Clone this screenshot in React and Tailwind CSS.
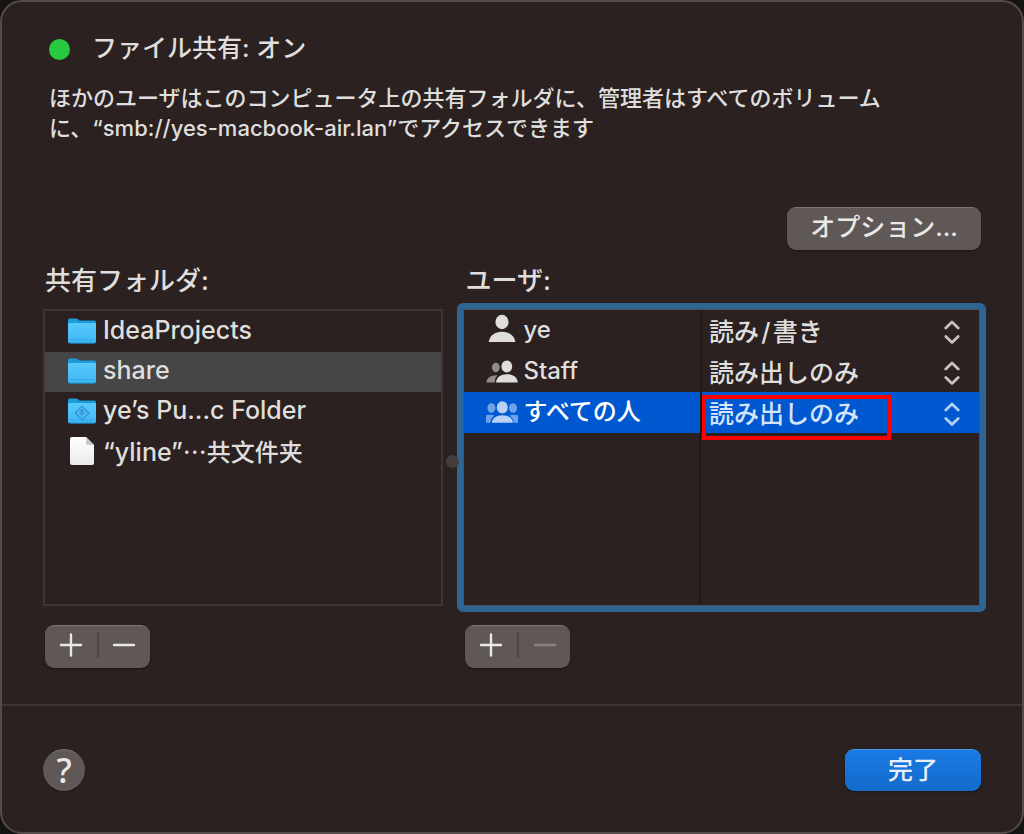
import React, { useState } from "react";

function FolderIcon({ shared }) {
  return (
    <svg viewBox="0 0 30 28" className="h-7 w-[30px] shrink-0" aria-hidden="true">
      <defs>
        <linearGradient id="folderFront" x1="0" y1="0" x2="0" y2="1">
          <stop offset="0" stopColor="#5bcafb" />
          <stop offset="1" stopColor="#3db6f5" />
        </linearGradient>
      </defs>
      <path d="M1 3.2Q1 1.5 2.7 1.5H9.2Q10.2 1.5 11 2.3L12.4 3.5H27.4Q29 3.5 29 5.1V20H1Z" fill="#1a9bdc" />
      <path d="M1 7Q1 6 2 6H28Q29 6 29 7V24.6Q29 26.3 27.3 26.3H2.7Q1 26.3 1 24.6Z" fill="url(#folderFront)" />
      <path d="M1 22.8H29" stroke="#31a6e4" strokeWidth="0.8" />
      <path d="M1.3 25.2Q1.8 26.1 3 26.1H27Q28.2 26.1 28.7 25.2" stroke="#188fcd" strokeWidth="0.9" fill="none" />
      {shared && (
        <g fill="none" stroke="#2f93cf" strokeWidth="1.1" strokeLinejoin="round">
          <path d="M15 9.2L21.8 16L15 22.8L8.2 16Z" />
          <path d="M15 12.2V19.5M12 16.2H18M12.8 14.5L15 12.3L17.2 14.5" />
        </g>
      )}
    </svg>
  );
}

function DocumentIcon() {
  return (
    <svg viewBox="0 0 30 30" className="h-[30px] w-[30px] shrink-0" aria-hidden="true">
      <defs>
        <linearGradient id="paper" x1="0" y1="0" x2="0" y2="1">
          <stop offset="0" stopColor="#ffffff" />
          <stop offset="1" stopColor="#ebebeb" />
        </linearGradient>
      </defs>
      <path d="M3 3Q3 1 5 1H19L27 9V27Q27 29 25 29H5Q3 29 3 27Z" fill="url(#paper)" />
      <path d="M19 1V7.2Q19 9 20.8 9H27Z" fill="#c9c9c9" />
    </svg>
  );
}

function UserIcon() {
  return (
    <svg viewBox="0 0 32 32" className="size-8 shrink-0" fill="#dfdedd" aria-hidden="true">
      <ellipse cx="16" cy="8" rx="6.6" ry="7.2" />
      <path d="M2.7 28C3.6 21.3 9 17.7 16 17.7S28.4 21.3 29.3 28Z" />
    </svg>
  );
}

function PairIcon() {
  return (
    <svg viewBox="0 0 32 24" className="h-6 w-8 shrink-0" aria-hidden="true">
      <g fill="#918c8b">
        <ellipse cx="9.8" cy="8.5" rx="3.9" ry="4.7" />
        <path d="M0.3 23.5C0.8 18.8 4.8 16 11.5 16.2C9.6 18 8.9 20.2 8.7 23.5Z" />
      </g>
      <g fill="#dfdedd">
        <ellipse cx="20.8" cy="7.5" rx="5.4" ry="5.9" />
        <path d="M10 23.5C10.6 18.2 14.7 15.3 20.9 15.3S31.2 18.2 31.8 23.5Z" />
      </g>
    </svg>
  );
}

function GroupIcon() {
  return (
    <svg viewBox="0 0 32 24" className="h-6 w-8 shrink-0" aria-hidden="true">
      <g fill="#6fa2e8">
        <ellipse cx="5.4" cy="8" rx="4" ry="4.8" />
        <ellipse cx="27" cy="8" rx="4" ry="4.8" />
        <path d="M0 15.2Q4.5 14 8.5 15.6C5.7 17.3 4.7 19.5 4.4 22.7H0Z" />
        <path d="M32 15.2Q27.5 14 23.5 15.6C26.3 17.3 27.3 19.5 27.6 22.7H32Z" />
      </g>
      <g fill="#b9d1f5">
        <ellipse cx="16.3" cy="7.4" rx="5.5" ry="6.1" />
        <path d="M5.8 22.7C6.4 18 10.2 15.2 16.3 15.2S26.4 18 27 22.7Z" />
      </g>
    </svg>
  );
}

function Stepper() {
  return (
    <svg viewBox="0 0 18 26" className="pointer-events-none h-[26px] w-[18px] shrink-0 opacity-85" fill="none" stroke="currentColor" strokeWidth="2.8" strokeLinecap="round" strokeLinejoin="round" aria-hidden="true">
      <path d="M2.8 8L9 2L15.2 8M2.8 16.5L9 22.5L15.2 16.5" />
    </svg>
  );
}

function PlusMinus({ label, minusDisabled }) {
  return (
    <div role="group" aria-label={label} className="flex h-[43px] w-[105px] items-center rounded-[9px] border-t border-[#7d7674] bg-[#605856] pb-1 text-[#e9e8e7] shadow-[0_1px_2px_#0006]">
      <button type="button" aria-label="追加" className="flex h-full flex-1 items-center justify-center">
        <svg viewBox="0 0 24 24" className="size-6" stroke="currentColor" strokeWidth="2.4" strokeLinecap="round" aria-hidden="true">
          <path d="M2 12H22M12 1.500V22.500" />
        </svg>
      </button>
      <span className="h-[26px] w-[2px] bg-[#4d4644]" />
      <button type="button" aria-label="削除" disabled={minusDisabled} className="flex h-full flex-1 items-center justify-center disabled:text-[#8a8381]">
        <svg viewBox="0 0 24 24" className="size-6" stroke="currentColor" strokeWidth="2.4" strokeLinecap="round" aria-hidden="true">
          <path d="M2 12H22" />
        </svg>
      </button>
    </div>
  );
}

const folders = [
  { name: "IdeaProjects", icon: <FolderIcon /> },
  { name: "share", icon: <FolderIcon /> },
  { name: "ye’s Pu...c Folder", icon: <FolderIcon shared /> },
  { name: "“yline”", rest: "⋯共文件夹", icon: <DocumentIcon /> },
];

const users = [
  { name: "ye", icon: <UserIcon />, access: "読み\u200a/\u200a書き" },
  { name: "Staff", icon: <PairIcon />, access: "読み出しのみ" },
  { name: "すべての人", icon: <GroupIcon />, access: "読み出しのみ", marked: true },
];

const levels = ["読み\u200a/\u200a書き", "読み出しのみ"];

export default function App() {
  const [folder, setFolder] = useState(1);
  const [user, setUser] = useState(2);

  return (
    <div className="min-h-screen bg-[#161313] font-['Inter','Noto_Sans_CJK_JP',sans-serif] text-2xl font-medium text-[#dfdedd]">
      <div className="flex min-h-screen flex-col rounded-[22px] border-2 border-[#544c4a] bg-[#2a2120]">
        <main className="flex-1 pr-9 pb-8 pl-[41px]">
          <header className="pt-[29px] pl-1.5">
            <h1 className="flex h-9 items-center gap-[22px] text-[25px] font-medium">
              <span className="size-[21px] rounded-full bg-[#28c840]" />
              ファイル共有: オン
            </h1>
            <p className="mt-4 max-w-[850px] text-[22px] leading-[30px]">
              ほかのユーザはこのコンピュータ上の共有フォルダに、管理者はすべてのボリュームに、“smb://yes-macbook-air.lan”でアクセスできます
            </p>
          </header>

          <div className="mt-16 flex justify-end pr-[5px]">
            <button type="button" className="h-[43px] w-[194px] rounded-[9px] border-t border-[#7d7674] bg-[#605856] pb-1 text-[25px] leading-9 text-[#e9e8e7] shadow-[0_1px_2px_#0006]">
              オプション...
            </button>
          </div>

          <div className="mt-3 grid grid-cols-[400fr_528fr] gap-x-3.5">
            <section className="flex flex-col">
              <h2 id="folders" className="h-[42px] pl-0.5 text-[26px] leading-[38px]">共有フォルダ:</h2>
              <div className="relative mt-[5px] h-[297px] border-2 border-[#3e3635]">
                <ul aria-labelledby="folders" className="pt-px">
                  {folders.map((f, i) => (
                    <li key={f.name}>
                      <button
                        type="button"
                        aria-pressed={folder === i}
                        onClick={() => setFolder(i)}
                        className={`flex h-10 w-full items-center gap-1.5 pb-0.5 pl-[22px] text-left text-[25px] whitespace-nowrap ${folder === i ? "bg-[#464646]" : ""}`}
                      >
                        {f.icon}
                        <span>
                          {f.name}
                          {f.rest && <span lang="zh" className="font-['Noto_Sans_CJK_SC',sans-serif] text-2xl leading-9">{f.rest}</span>}
                        </span>
                      </button>
                    </li>
                  ))}
                </ul>
                <span className="absolute top-[144px] -right-[18px] size-[13px] rounded-full bg-[#453e3d]" />
              </div>
              <div className="mt-[19px] pl-0.5">
                <PlusMinus label="共有フォルダ" />
              </div>
            </section>

            <section className="flex flex-col">
              <h2 className="h-[41px] pl-2 text-[26px] leading-[38px]">ユーザ:</h2>
              <div className="h-[309px] rounded-md border-6 border-[#2f6592] bg-[#2a2120]">
                <div className="flex h-full flex-col border border-[#4c5258]">
                  <table className="w-full table-fixed border-collapse" aria-label="ユーザ">
                    <tbody>
                      {users.map((u, i) => (
                        <tr key={u.name} onClick={() => setUser(i)} className={user === i ? "bg-[#0058d0] text-white" : ""}>
                          <td className="h-[41px] w-[46%] border-r-2 border-[#1d1b1b] p-0">
                            <div className="flex items-center gap-[5px] pb-0.5 pl-[22px] leading-9">
                              {u.icon}
                              {u.name}
                            </div>
                          </td>
                          <td className="h-[41px] p-0">
                            <div className={`relative flex h-[41px] items-center pt-1 pr-[18px] pl-[7px] ${user === i ? "text-[#d5e4fa]" : ""}`}>
                              <select aria-label={`${u.name}のアクセス権`} defaultValue={u.access} className="h-9 min-w-0 flex-1 appearance-none bg-transparent text-[25px] outline-none">
                                {levels.map((l) => (
                                  <option key={l} className="bg-[#2a2120]">{l}</option>
                                ))}
                              </select>
                              <Stepper />
                              {u.marked && <span className="pointer-events-none absolute top-[3px] left-0 h-[45px] w-[189px] border-4 border-[#ff0000]" />}
                            </div>
                          </td>
                        </tr>
                      ))}
                    </tbody>
                  </table>
                  <div className="w-[46%] flex-1 border-r-2 border-[#1d1b1b]" />
                </div>
              </div>
              <div className="mt-[13px] pl-2">
                <PlusMinus label="ユーザ" minusDisabled />
              </div>
            </section>
          </div>
        </main>

        <footer className="flex items-start justify-between border-t-2 border-[#3e3635] pt-[43px] pr-[41px] pb-[41px] pl-[41px]">
          <button type="button" aria-label="ヘルプ" className="size-[42px] rounded-full border-t border-[#7d7674] bg-[#605856] pb-0.5 font-['Noto_Sans',sans-serif] text-[34px] leading-none font-medium text-[#e9e8e7] shadow-[0_1px_2px_#0006]">
            ?
          </button>
          <button type="button" className="h-[42px] w-[136px] rounded-[9px] border-t border-[#4f98ea] bg-linear-to-b from-[#1a7ae4] to-[#136bcb] pb-0.5 text-[25px] leading-9 text-[#e6effb] shadow-[0_1px_2px_#0006]">
            完了
          </button>
        </footer>
      </div>
    </div>
  );
}
